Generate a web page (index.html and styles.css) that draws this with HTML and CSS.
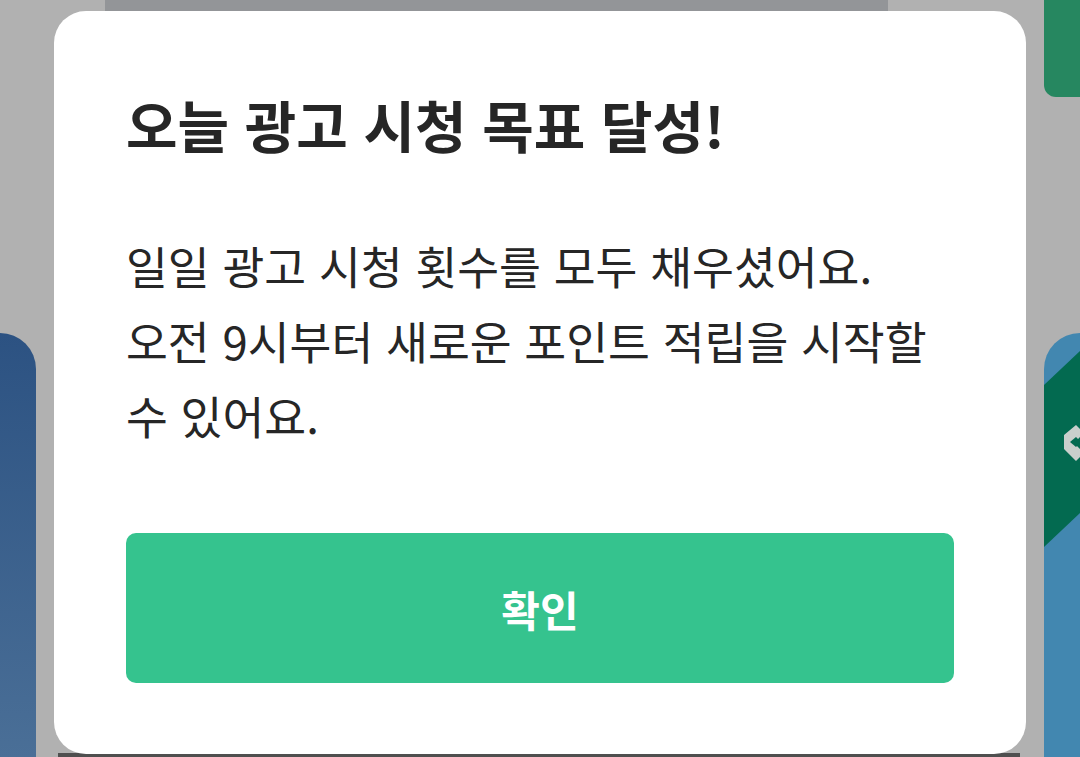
FILE: index.html
```html
<!DOCTYPE html>
<html lang="ko">
<head>
  <meta charset="UTF-8">
  <meta name="viewport" content="width=device-width, initial-scale=1.0">
  <title>광고 시청 목표 달성</title>
  <link rel="stylesheet" href="styles.css">
</head>
<body>
  <!-- page behind the dimmed overlay -->
  <div class="backdrop">
    <div class="bg-top"></div>
    <div class="bg-badge"></div>
    <div class="bg-card bg-card-left"></div>
    <div class="bg-card bg-card-right">
      <svg width="36" height="424" viewBox="0 0 36 424">
        <polygon points="0,52 36,18 36,180 0,214" fill="#036a50"/>
        <polygon points="20,102 32,92 36,96 36,104 30,110 36,116 36,124 32,128 20,116" fill="#c9cfcc"/>
        <polygon points="26,109 32,104 34,106 34,112 32,114" fill="#036a50"/>
      </svg>
    </div>
    <div class="bg-bottom"></div>
  </div>

  <div class="overlay">
    <div class="dialog">
      <h2 class="dialog-title">오늘 광고 시청 목표 달성!</h2>
      <p class="dialog-text">일일 광고 시청 횟수를 모두 채우셨어요.<br>오전 9시부터 새로운 포인트 적립을 시작할 수 있어요.</p>
      <button class="dialog-btn" type="button">확인</button>
    </div>
  </div>
</body>
</html>
```

FILE: styles.css
```css
html, body {
  margin: 0;
  padding: 0;
}
body {
  width: 1080px;
  height: 757px;
  overflow: hidden;
  position: relative;
  background-color: #b1b1b1;
  font-family: "Noto Sans CJK KR", "Noto Sans", sans-serif;
  color: #262626;
}
.backdrop {
  position: absolute;
  left: 0;
  top: 0;
  width: 1080px;
  height: 757px;
}
.bg-top {
  position: absolute;
  left: 105px;
  top: 0;
  width: 783px;
  height: 11px;
  background-color: #939598;
}
.bg-badge {
  position: absolute;
  right: 0;
  top: 0;
  width: 36px;
  height: 97px;
  background-color: #268760;
  border-bottom-left-radius: 12px;
}
.bg-card {
  position: absolute;
  top: 333px;
  width: 36px;
  height: 424px;
  overflow: hidden;
}
.bg-card-left {
  left: 0;
  border-top-right-radius: 36px;
  background: linear-gradient(180deg, #2c5282 0%, #4a6f97 100%);
}
.bg-card-right {
  right: 0;
  border-top-left-radius: 36px;
  background-color: #4287b0;
}
.bg-card svg {
  display: block;
}
.bg-bottom {
  position: absolute;
  left: 58px;
  bottom: 0;
  width: 962px;
  height: 4px;
  background-color: #4f4f4f;
}

.overlay {
  position: relative;
  display: flex;
  justify-content: center;
  padding-top: 11px;
}
.dialog {
  box-sizing: border-box;
  width: 972px;
  height: 743px;
  padding: 81px 72px 0;
  background-color: #fff;
  border-radius: 32px;
}
.dialog-title {
  margin: 0;
  font-size: 56px;
  line-height: 64px;
  font-weight: 700;
  color: #262626;
}
.dialog-text {
  margin: 72px 0 0;
  font-size: 45.5px;
  line-height: 75px;
  font-weight: 400;
  color: #262626;
}
.dialog-btn {
  display: block;
  width: 100%;
  height: 150px;
  margin-top: 80px;
  border: none;
  border-radius: 10px;
  background-color: #35c38e;
  color: #fff;
  font-family: inherit;
  font-size: 42px;
  font-weight: 700;
  cursor: pointer;
}
```
